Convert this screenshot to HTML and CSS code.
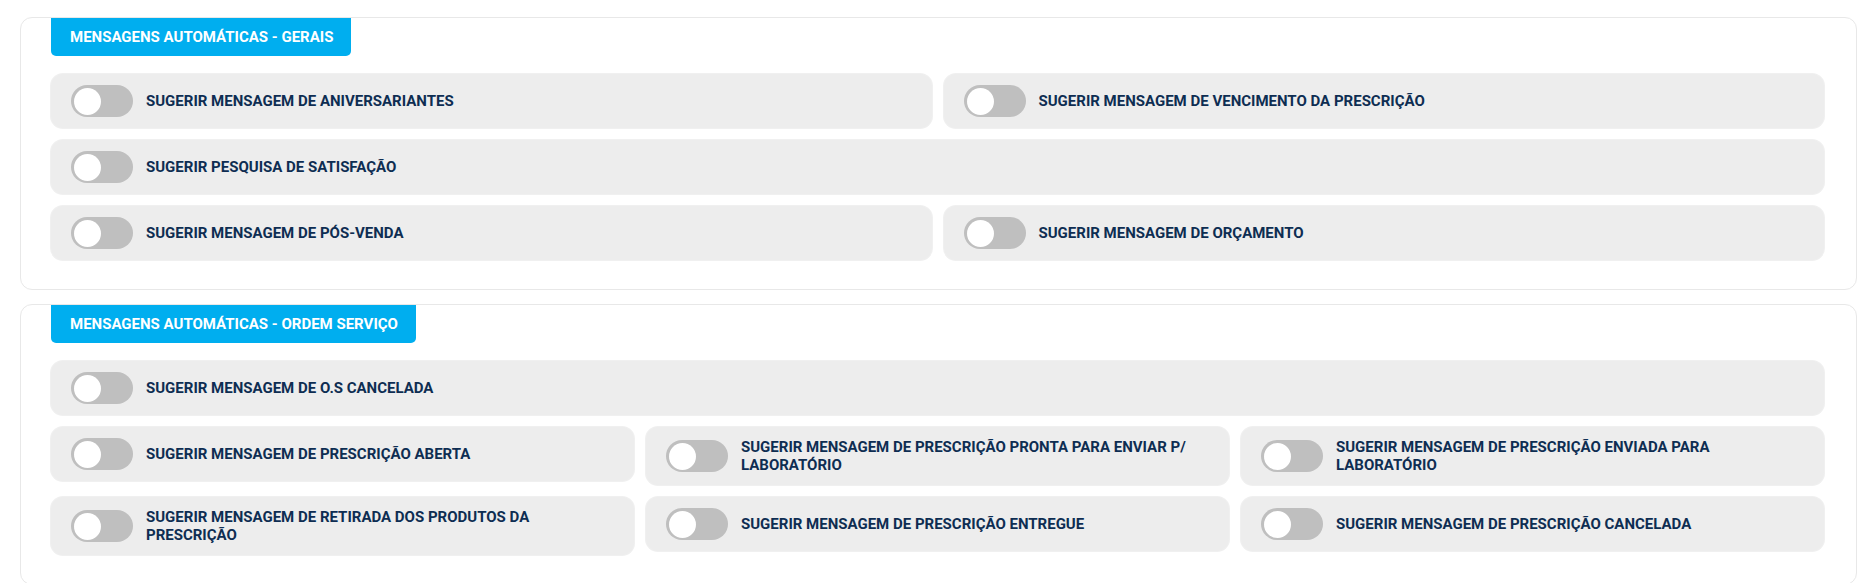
FILE: index.html
```html
<!DOCTYPE html>
<html lang="pt-BR">
<head>
<meta charset="utf-8">
<title>Mensagens automáticas</title>
<link rel="stylesheet" href="styles.css">
</head>
<body>
<div class="page">
  <section class="card">
    <div class="tab">MENSAGENS AUTOMÁTICAS - GERAIS</div>
    <div class="grid grid-2">
      <label class="item"><span class="toggle"><span class="knob"></span></span><span class="label">SUGERIR MENSAGEM DE ANIVERSARIANTES</span></label>
      <label class="item"><span class="toggle"><span class="knob"></span></span><span class="label">SUGERIR MENSAGEM DE VENCIMENTO DA PRESCRIÇÃO</span></label>
      <label class="item full"><span class="toggle"><span class="knob"></span></span><span class="label">SUGERIR PESQUISA DE SATISFAÇÃO</span></label>
      <label class="item"><span class="toggle"><span class="knob"></span></span><span class="label">SUGERIR MENSAGEM DE PÓS-VENDA</span></label>
      <label class="item"><span class="toggle"><span class="knob"></span></span><span class="label">SUGERIR MENSAGEM DE ORÇAMENTO</span></label>
    </div>
  </section>
  <section class="card">
    <div class="tab">MENSAGENS AUTOMÁTICAS - ORDEM SERVIÇO</div>
    <div class="grid grid-3">
      <label class="item full"><span class="toggle"><span class="knob"></span></span><span class="label">SUGERIR MENSAGEM DE O.S CANCELADA</span></label>
      <label class="item"><span class="toggle"><span class="knob"></span></span><span class="label">SUGERIR MENSAGEM DE PRESCRIÇÃO ABERTA</span></label>
      <label class="item"><span class="toggle"><span class="knob"></span></span><span class="label">SUGERIR MENSAGEM DE PRESCRIÇÃO PRONTA PARA ENVIAR P/ LABORATÓRIO</span></label>
      <label class="item"><span class="toggle"><span class="knob"></span></span><span class="label">SUGERIR MENSAGEM DE PRESCRIÇÃO ENVIADA PARA LABORATÓRIO</span></label>
      <label class="item"><span class="toggle"><span class="knob"></span></span><span class="label">SUGERIR MENSAGEM DE RETIRADA DOS PRODUTOS DA PRESCRIÇÃO</span></label>
      <label class="item"><span class="toggle"><span class="knob"></span></span><span class="label">SUGERIR MENSAGEM DE PRESCRIÇÃO ENTREGUE</span></label>
      <label class="item"><span class="toggle"><span class="knob"></span></span><span class="label">SUGERIR MENSAGEM DE PRESCRIÇÃO CANCELADA</span></label>
    </div>
  </section>
</div>
</body>
</html>
```

FILE: styles.css
```css
* { box-sizing: border-box; }
html, body { margin: 0; padding: 0; background: #ffffff; }
body {
  font-family: Roboto, "Liberation Sans", Arial, sans-serif;
  color: #0e2d52;
}
.page {
  padding: 17px 11px 0 20px;
  display: flex;
  flex-direction: column;
  gap: 14px;
}
.card {
  background: #ffffff;
  border: 1px solid #e8e8e8;
  border-radius: 12px;
  padding: 0 32px 29px 30px;
}
.tab {
  display: inline-block;
  background: #00aeef;
  color: #ffffff;
  font-weight: 700;
  font-size: 15px;
  line-height: 38px;
  height: 38px;
  padding: 0 18px 0 19px;
  border-radius: 0 0 5px 5px;
  margin-bottom: 18px;
}
.grid {
  display: grid;
  gap: 12px;
  align-items: start;
}
.grid-2 { grid-template-columns: 1fr 1fr; }
.grid-3 { grid-template-columns: 1fr 1fr 1fr; }
.full { grid-column: 1 / -1; }
.item {
  display: flex;
  align-items: center;
  gap: 13px;
  background: #ededed;
  border-radius: 12px;
  box-shadow: 0 0 0 1px #f0f0f0;
  padding: 11px 20px;
  min-height: 54px;
}
.toggle {
  flex: none;
  width: 62px;
  height: 32px;
  border-radius: 16px;
  background: #bfbfbf;
  padding: 3px;
  display: flex;
  align-items: center;
}
.knob {
  width: 27px;
  height: 27px;
  border-radius: 50%;
  background: #ffffff;
}
.label {
  font-weight: 700;
  font-size: 15px;
  line-height: 18px;
}
```
